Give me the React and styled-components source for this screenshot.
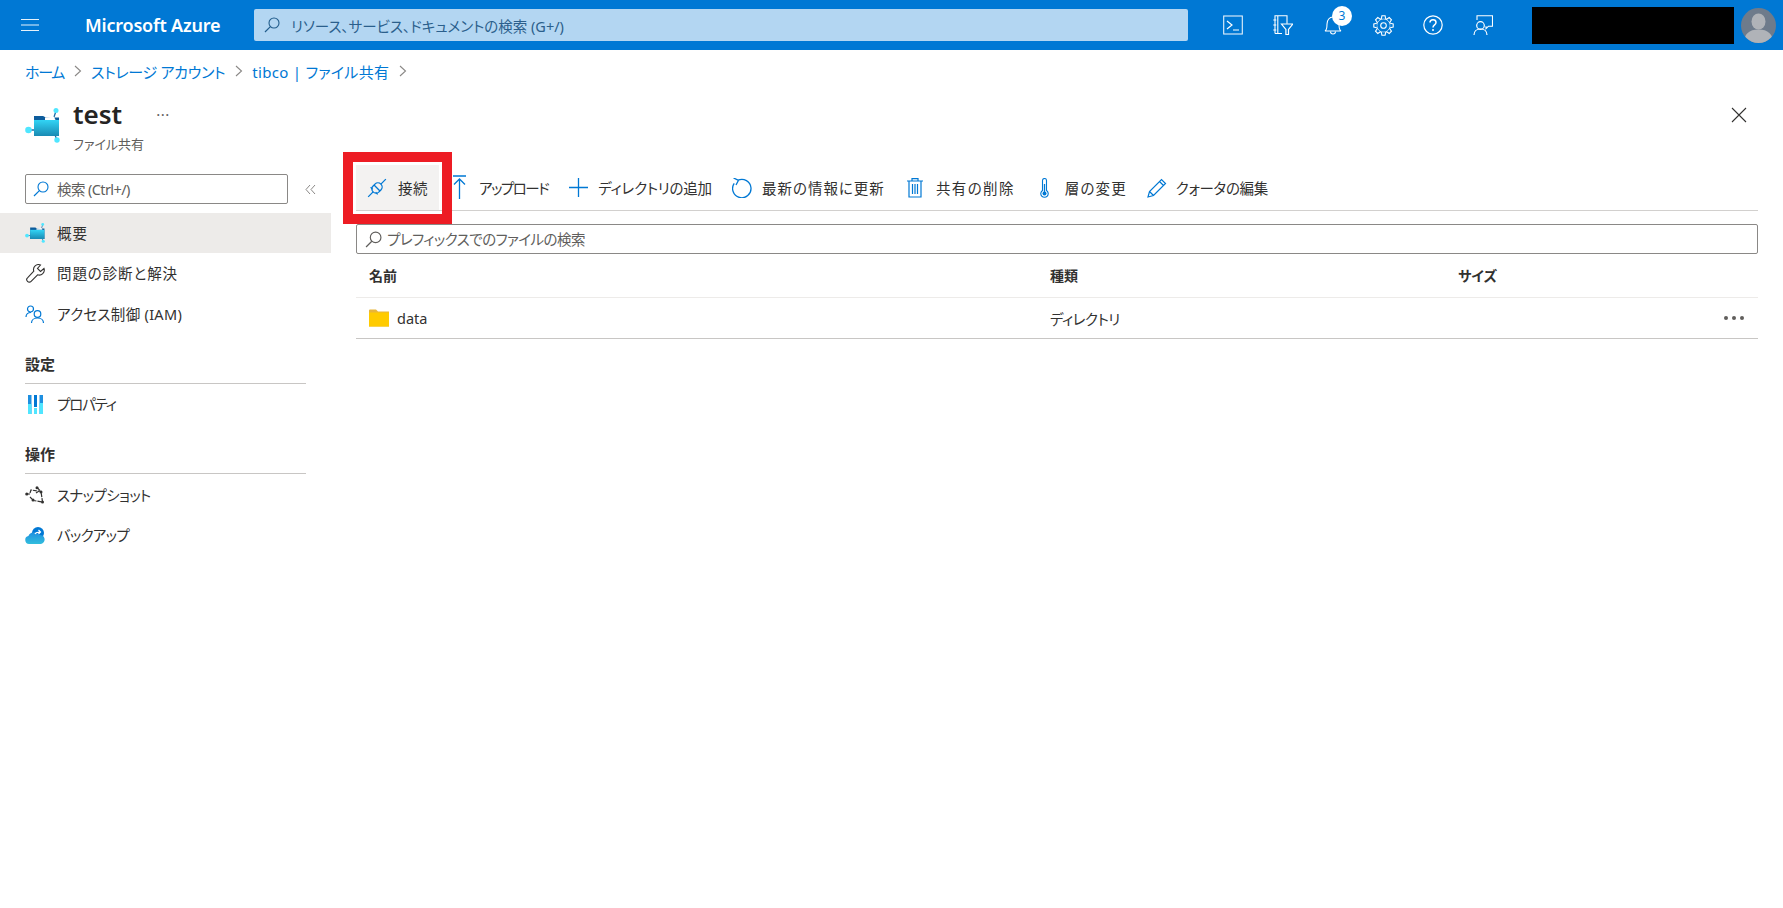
import React from "react";
import styled, { createGlobalStyle } from "styled-components";

const Global = createGlobalStyle`
  html, body { margin: 0; padding: 0; background: #fff; }
  body {
    font-family: "Noto Sans", "Noto Sans CJK JP", sans-serif;
    font-feature-settings: "palt";
    color: #323130;
    font-size: 14.5px;
    overflow: hidden;
  }
  svg { display: block; flex: none; }
`;

const Page = styled.div`width: 1783px; height: 908px; display: flex; flex-direction: column; overflow: hidden;`;

/* ---------- top bar ---------- */
const TopBar = styled.header`
  height: 50px; flex: none; background: #0078d4; display: flex; align-items: center; color: #fff;
`;
const Burger = styled.div`width: 85px; padding-left: 21px; box-sizing: border-box; flex: none;`;
const Brand = styled.div`width: 169px; flex: none; font-size: 18px; font-weight: 600; letter-spacing: -.2px; white-space: nowrap;`;
const GlobalSearch = styled.div`
  width: 934px; height: 32px; flex: none; background: #b3d6f2; border-radius: 2px; display: flex; align-items: center;
  padding-left: 10px; gap: 11px; box-sizing: border-box; color: #2b5f8c; font-size: 14.5px; white-space: nowrap;
`;
const TopIcons = styled.div`display: flex; margin-left: 35px; gap: 30px; align-items: center;`;
const TopIcon = styled.div`width: 20px; height: 20px; position: relative;`;
const Badge = styled.span`
  position: absolute; left: 9px; top: -9px; width: 20px; height: 20px; border-radius: 50%; background: #fff;
  color: #0078d4; font-size: 12px; line-height: 20px; text-align: center;
`;
const Redacted = styled.div`width: 202px; height: 37px; background: #000; margin-left: 39px; flex: none;`;
const Avatar = styled.div`width: 35px; height: 35px; margin-left: 7px; border-radius: 50%; overflow: hidden; flex: none;`;

/* ---------- breadcrumb & title ---------- */
const Crumbs = styled.nav`
  height: 46px; box-sizing: border-box; padding: 0 0 4px 25px; flex: none; display: flex; align-items: center; color: #0078d4; font-size: 15px; white-space: nowrap;
`;
const Crumb = styled.a`letter-spacing: ${p => p.$ls};`;
const CrumbSep = styled.span`margin: 0 9.5px; color: #605e5c;`;

const TitleRow = styled.div`
  height: 69px; flex: none; display: flex; padding: 12px 36px 0 25px; box-sizing: border-box;
`;
const TitleText = styled.div`margin-left: 13px; margin-top: -12px;`;
const TitleLine = styled.div`display: flex; align-items: center;`;
const Title = styled.h1`margin: 0; font-size: 26px; line-height: 36px; font-weight: 600; color: #252423;`;
const TitleMore = styled.span`margin-left: 34px; font-size: 15px; line-height: 15px; color: #605e5c; letter-spacing: 0.5px;`;
const Subtitle = styled.div`font-size: 13px; color: #605e5c; line-height: 18px; margin-top: 3px;`;
const Close = styled.div`margin-left: auto; margin-top: -1px;`;

/* ---------- body ---------- */
const Body = styled.div`flex: 1; display: flex; min-height: 0;`;
const Side = styled.aside`width: 331px; flex: none; padding-top: 9px; box-sizing: border-box; margin-right: 25px;`;
const SideTop = styled.div`display: flex; align-items: center; padding-left: 25px; height: 30px; margin-bottom: 9px;`;
const SearchBox = styled.div`
  box-sizing: border-box; border: 1px solid #8a8886; border-radius: 2px; display: flex; align-items: center;
  color: #605e5c; white-space: nowrap; height: ${p => p.$h}px; width: ${p => p.$w}; padding-left: ${p => p.$pad}px; gap: ${p => p.$gap}px;
  letter-spacing: ${p => p.$ls};
`;
const SearchLabel = styled.span`padding-bottom: 2px;`;
const Collapse = styled.div`margin-left: 17px;`;
const NavRow = styled.div`
  height: 40px; display: flex; align-items: center; padding-left: 25px; gap: 12px; white-space: nowrap;
  background: ${p => p.$active ? "#edebe9" : "transparent"}; margin-bottom: .5px; box-sizing: border-box;
  letter-spacing: ${p => p.$ls};
`;
const NavIconSlot = styled.div`width: 20px; display: flex; justify-content: center;`;
const NavLabel = styled.span`padding-bottom: 2px;`;
const Section = styled.div`
  margin: 21.5px 25px 1px 25px; border-bottom: 1px solid #c8c6c4; height: 28px; line-height: 16px; font-weight: 600; font-size: 15px; box-sizing: border-box;
`;

const Main = styled.main`flex: 1; min-width: 0; padding-right: 25px;`;
const Toolbar = styled.div`
  height: 46px; box-sizing: border-box; display: flex; align-items: stretch; border-bottom: 1px solid #d2d0ce; margin-bottom: 13px; white-space: nowrap;
`;
const ToolButton = styled.div`
  display: flex; align-items: center; gap: ${p => p.$gap || 13}px; flex: none; margin-right: ${p => p.$mr || 0}px; height: 45px;
  letter-spacing: ${p => p.$ls || "0"};
`;
const ConnectButton = styled(ToolButton)`
  position: relative; background: #f3f2f1; width: 83px; padding-left: 11px; box-sizing: border-box; margin-right: 14px;
  &::after {
    content: ""; position: absolute; left: -13px; right: -13px; top: -13px; bottom: -14px;
    border: 10px solid #ed1c24; pointer-events: none;
  }
`;
const Table = styled.div`font-size: 14.5px;`;
const Row = styled.div`
  display: grid; grid-template-columns: 694px 408px 1fr 34px; align-items: center; box-sizing: border-box;
  height: ${p => p.$h}px; border-bottom: 1px solid ${p => p.$line};
`;
const HeadCell = styled.div`font-weight: 600; font-size: 14px; padding-bottom: 2px;`;
const HeadName = styled(HeadCell)`padding-left: 13px;`;
const NameCell = styled.div`display: flex; align-items: center; gap: 8px; padding-left: 13px;`;
const KindCell = styled.span`letter-spacing: -.5px;`;
const Dots = styled.div`display: flex; gap: 4px;`;
const Dot = styled.i`width: 4px; height: 4px; border-radius: 50%; background: #605e5c; display: block;`;

/* ---------- icons ---------- */
const S = ({ w = 20, h = 20, vb, children, ...r }) => (
  <svg width={w} height={h} viewBox={vb || `0 0 ${w} ${h}`} fill="none" {...r}>{children}</svg>
);
const Search = ({ c = "#0078d4", size = 16 }) => (
  <S w={size} h={size} vb="0 0 16 16"><circle cx="10" cy="6" r="5" stroke={c} strokeWidth="1.1"/><path d="M6.4 9.6 1 15" stroke={c} strokeWidth="1.2"/></S>
);
const Chevron = () => <S w={8} h={12}><path d="M1 1l5.5 5L1 11" stroke="#8a8886" strokeWidth="1.1"/></S>;

const FileShareIcon = ({ w = 35, h = 35, id = "fs" }) => (
  <S w={w} h={h} vb="0 0 35 35">
    <defs><linearGradient id={id} x1="0" y1="0" x2="0" y2="1"><stop offset="0" stopColor="#32d4f5"/><stop offset="1" stopColor="#198ab3"/></linearGradient></defs>
    <path d="M4 22h6M31 3l-2 6M30 27l2 5" stroke="#1b6ea8" strokeWidth="1.3"/>
    <path d="M9 8h9l3 1.500h13V28H9z" fill="#0d5c9c"/>
    <path d="M20 9.500l9-.8 1.500 3.300H20z" fill="#fff"/>
    <path d="M9 12h25v16H9z" fill={`url(#${id})`}/>
    <circle cx="31" cy="2.500" r="2.500" fill="#50e6ff"/><circle cx="3.500" cy="22" r="3.300" fill="#50e6ff"/><circle cx="32" cy="32" r="2.700" fill="#50e6ff"/>
  </S>
);
const Terminal = () => (
  <S><rect x=".7" y="1" width="18.6" height="18" stroke="#fff" strokeWidth="1.1" opacity=".9"/><path d="M4 6l5 4-5 4M10 15h6" stroke="#fff" strokeWidth="1.2"/></S>
);
const DirFilter = () => (
  <S>
    <path d="M2 18.500V.7h12v8M2 18.500h7M4.800 .7v17.800" stroke="#fff" strokeWidth="1.1"/>
    <path d="M.3 5h3M.3 10h3M.3 15h3" stroke="#fff" strokeWidth="1.1"/>
    <path d="M8.500 9h11.300l-4.300 5.500v5h-2.600v-5z" stroke="#fff" strokeWidth="1.2" fill="#0078d4"/>
  </S>
);
const Bell = () => (
  <S><g transform="translate(1 0)"><path d="M1 16c2-1 2-3 2-7 0-4 2.500-7 6-7s6 3 6 7c0 4 0 6 2 7z" stroke="#fff" strokeWidth="1.100"/><path d="M6.500 16.500a2.500 2.500 0 0 0 5 0" stroke="#fff" strokeWidth="1.100"/></g></S>
);
const Gear = () => {
  const teeth = Array.from({ length: 8 }, (_, i) => i * 45);
  return (
    <S w={21} h={21}>
      <circle cx="10.5" cy="10.500" r="2.800" stroke="#fff" strokeWidth="1.100"/>
      <circle cx="10.5" cy="10.500" r="6.900" stroke="#fff" strokeWidth="1.100"/>
      {teeth.map(a => (
        <path key={a} transform={`rotate(${a} 10.5 10.5)`} d="M8.300 3.800 8.900 .8h3.200l.6 3" stroke="#fff" strokeWidth="1.100" fill="#0078d4"/>
      ))}
    </S>
  );
};
const HelpIcon = () => (
  <S><circle cx="10" cy="10" r="9.200" stroke="#fff" strokeWidth="1.200"/><path d="M7 7.500C7 5.500 8.500 4.700 10 4.700s3 1 3 2.700c0 2.600-3 2.400-3 5.100" stroke="#fff" strokeWidth="1.500"/><circle cx="10" cy="15" r="1" fill="#fff"/></S>
);
const Feedback = () => (
  <S>
    <path d="M4 5V.7h15.500v10.500h-4l-2.500 2.500v-2.500" stroke="#fff" strokeWidth="1.100"/>
    <circle cx="7.500" cy="10.500" r="3.800" stroke="#fff" strokeWidth="1.200" fill="#0078d4"/>
    <path d="M1 20c0-3.500 2.500-6 6.500-6s6.500 2.500 6.500 6" stroke="#fff" strokeWidth="1.200"/>
  </S>
);
const Person = () => (
  <S w={35} h={35}>
    <rect width="35" height="35" fill="#6e7b8b"/>
    <ellipse cx="17.500" cy="13.500" rx="7" ry="8" fill="#b0b3b8"/>
    <path d="M3 35c0-9 5-13.500 14.500-13.500S32 26 32 35z" fill="#b0b3b8"/>
  </S>
);
const CloseIcon = () => <S w={16} h={16}><path d="M1 1l14 14M15 1 1 15" stroke="#323130" strokeWidth="1.100"/></S>;
const DoubleChev = () => <S w={11} h={11}><path d="M5 1 1 5.500 5 10M10 1 6 5.500l4 4.500" stroke="#8a8886" strokeWidth="1"/></S>;
const Wrench = () => (
  <S w={19} h={19}><path d="M18 4.500l-3.500 3-3-3L14.500 1a5 5 0 0 0-6.700 6.200L1.500 13.800a2.500 2.500 0 0 0 3.600 3.600l6.500-6.600A5 5 0 0 0 18 4.500z" stroke="#323130" strokeWidth="1.100"/></S>
);
const Iam = () => (
  <S w={20} h={18}>
    <circle cx="5.500" cy="4" r="3" stroke="#0078d4" strokeWidth="1.200"/>
    <path d="M1 12c0-2.500 2-4.500 5-4.500" stroke="#0078d4" strokeWidth="1.200"/>
    <circle cx="12.500" cy="9" r="3.300" stroke="#0078d4" strokeWidth="1.200"/>
    <path d="M6.500 18c0-3 2.500-5 6-5s6 2 6 5" stroke="#0078d4" strokeWidth="1.200"/>
  </S>
);
const Props = () => (
  <S w={16} h={19}>
    <rect x="1" width="3.500" height="19" fill="#1e8fe0"/><rect x="1" y="9" width="3.500" height="10" fill="#50e6ff"/>
    <rect x="7" width="3" height="12" fill="#0078d4"/><rect x="7" y="13" width="3" height="6" fill="#50e6ff"/>
    <rect x="12.500" width="3.500" height="19" fill="#1e8fe0"/><rect x="12.500" y="8" width="3.500" height="11" fill="#50e6ff"/>
  </S>
);
const Snapshot = () => (
  <S w={20} h={18}>
    <path d="M5 7l1-3 10 1.500 1.500 10.500-9-1.500L5 11M1.500 8H5M12 1.500l4 4M11 7l3-2" stroke="#323130" strokeWidth="1.200" strokeDasharray="4 1"/>
    <circle cx="1.800" cy="8" r="1.600" fill="#323130"/><circle cx="12" cy="1.800" r="1.500" fill="#323130"/><circle cx="8" cy="14" r="1.500" fill="#323130"/><circle cx="17.500" cy="16" r="1.500" fill="#323130"/><circle cx="16" cy="6" r="1.500" fill="#323130"/>
  </S>
);
const Backup = () => (
  <S w={20} h={17}>
    <defs><linearGradient id="bk" x1="0" y1="0" x2="0" y2="1"><stop offset="0" stopColor="#1e8fe0"/><stop offset="1" stopColor="#32bedd"/></linearGradient></defs>
    <circle cx="13" cy="6" r="6" fill="#0078d4"/>
    <path d="M4 17a4 4 0 0 1-.6-7.900A6 6 0 0 1 14 8a4.500 4.500 0 0 1 2 9z" fill="url(#bk)"/>
    <path d="M10 7c1-2 3-2 5.500-2M13.500 3l2 2-2 2" stroke="#fff" strokeWidth="1.200"/>
  </S>
);
const Plug = () => (
  <S w={20} h={20}>
    <g transform="rotate(-45 10 10)" stroke="#0078d4" strokeWidth="1.300">
      <path d="M-2.500 10h7M15.500 10h7M10 5.800v8.400M6 8v-3M6 15v-3"/>
      <rect x="4.500" y="5.800" width="11" height="8.400" rx="4.200"/>
    </g>
  </S>
);
const Upload = () => <S w={13} h={25}><path d="M0 1h13M6.500 24V4M1 9.500l5.500-5.500L12 9.500" stroke="#0078d4" strokeWidth="1.300"/></S>;
const Plus = () => <S w={19} h={19}><path d="M9.500 0v19M0 9.500h19" stroke="#0078d4" strokeWidth="1.300"/></S>;
const Refresh = () => <S w={20} h={20}><path d="M6 2.200A9.200 9.200 0 1 1 2.200 5.400M1.500 0l5 2.300L4 7" stroke="#0078d4" strokeWidth="1.300"/></S>;
const Trash = () => (
  <S w={16} h={20}><path d="M0 3h16M5 3V.7h6V3M2 3v16h12V3M5.500 6v10M8 6v10M10.500 6v10" stroke="#0078d4" strokeWidth="1.200"/></S>
);
const Thermo = () => (
  <S w={9} h={20}><path d="M2.500 12.500V2.500a2 2 0 0 1 4 0v10a3.700 3.700 0 1 1-4 0z" stroke="#0078d4" strokeWidth="1.100"/><circle cx="4.500" cy="15.500" r="2" fill="#0078d4"/><path d="M4.500 6v9" stroke="#0078d4" strokeWidth="1.300"/></S>
);
const Pencil = () => (
  <S w={20} h={20}><path d="M1 19l1.500-5.500L14.500 1.500 18.500 5.500 6.500 17.500zM2.500 13.500l4 4M12.500 3.500l4 4" stroke="#0078d4" strokeWidth="1.200"/></S>
);
const Folder = () => (
  <S w={20} h={18}>
    <path d="M0 1.500A1 1 0 0 1 1 .5h6l2 2h11v15H0z" fill="#e8b53a"/>
    <rect y="3.500" width="20" height="14" fill="#ffcb00"/>
  </S>
);

const NavItem = ({ icon, children, active, ls }) => (
  <NavRow $active={active} $ls={ls}><NavIconSlot>{icon}</NavIconSlot><NavLabel>{children}</NavLabel></NavRow>
);

export default function App() {
  return (
    <Page>
      <Global />
      <TopBar>
        <Burger><S w={18} h={14}><path d="M0 1.500h18M0 7h18M0 12.500h18" stroke="#e6f2fb" strokeWidth="1.200"/></S></Burger>
        <Brand>Microsoft Azure</Brand>
        <GlobalSearch><Search c="#225d8c" /><span>リソース、サービス、ドキュメントの検索 (G+/)</span></GlobalSearch>
        <TopIcons>
          <TopIcon><Terminal /></TopIcon>
          <TopIcon><DirFilter /></TopIcon>
          <TopIcon><Bell /><Badge>3</Badge></TopIcon>
          <TopIcon><Gear /></TopIcon>
          <TopIcon><HelpIcon /></TopIcon>
          <TopIcon><Feedback /></TopIcon>
        </TopIcons>
        <Redacted />
        <Avatar><Person /></Avatar>
      </TopBar>

      <Crumbs>
        <Crumb $ls="-1.300px">ホーム</Crumb><CrumbSep><Chevron /></CrumbSep>
        <Crumb $ls="-.3px">ストレージ アカウント</Crumb><CrumbSep><Chevron /></CrumbSep>
        <Crumb $ls=".3px">tibco | ファイル共有</Crumb><CrumbSep><Chevron /></CrumbSep>
      </Crumbs>

      <TitleRow>
        <FileShareIcon />
        <TitleText>
          <TitleLine><Title>test</Title><TitleMore>···</TitleMore></TitleLine>
          <Subtitle>ファイル共有</Subtitle>
        </TitleText>
        <Close><CloseIcon /></Close>
      </TitleRow>

      <Body>
        <Side>
          <SideTop>
            <SearchBox $h={30} $w="263px" $pad={7} $gap={8} $ls="-.6px"><Search /><SearchLabel>検索 (Ctrl+/)</SearchLabel></SearchBox>
            <Collapse><DoubleChev /></Collapse>
          </SideTop>
          <NavItem active ls="1px" icon={<FileShareIcon w={20} h={20} id="fs2" />}>概要</NavItem>
          <NavItem ls=".9px" icon={<Wrench />}>問題の診断と解決</NavItem>
          <NavItem ls=".3px" icon={<Iam />}>アクセス制御 (IAM)</NavItem>
          <Section>設定</Section>
          <NavItem ls="-1.200px" icon={<Props />}>プロパティ</NavItem>
          <Section>操作</Section>
          <NavItem ls="-.6px" icon={<Snapshot />}>スナップショット</NavItem>
          <NavItem ls="-.75px" icon={<Backup />}>バックアップ</NavItem>
        </Side>

        <Main>
          <Toolbar>
            <ConnectButton $gap={11} $ls=".5px"><Plug /><span>接続</span></ConnectButton>
            <ToolButton $mr={21} $ls="-1.500px"><Upload /><span>アップロード</span></ToolButton>
            <ToolButton $mr={20} $gap={10} $ls="-.2px"><Plus /><span>ディレクトリの追加</span></ToolButton>
            <ToolButton $mr={22} $gap={10} $ls="1px"><Refresh /><span>最新の情報に更新</span></ToolButton>
            <ToolButton $mr={25} $ls="1.400px"><Trash /><span>共有の削除</span></ToolButton>
            <ToolButton $mr={20} $gap={16} $ls="1.100px"><Thermo /><span>層の変更</span></ToolButton>
            <ToolButton $gap={9} $ls="-.3px"><Pencil /><span>クォータの編集</span></ToolButton>
          </Toolbar>
          <SearchBox $h={30} $w="100%" $pad={8} $gap={5} $ls="-.55px"><Search c="#605e5c" size={17} /><SearchLabel>プレフィックスでのファイルの検索</SearchLabel></SearchBox>
          <Table>
            <Row $h={44} $line="#edebe9">
              <HeadName>名前</HeadName><HeadCell>種類</HeadCell><HeadCell>サイズ</HeadCell><span />
            </Row>
            <Row $h={41} $line="#c8c6c4">
              <NameCell><Folder /><span>data</span></NameCell>
              <KindCell>ディレクトリ</KindCell><span />
              <Dots><Dot /><Dot /><Dot /></Dots>
            </Row>
          </Table>
        </Main>
      </Body>
    </Page>
  );
}
